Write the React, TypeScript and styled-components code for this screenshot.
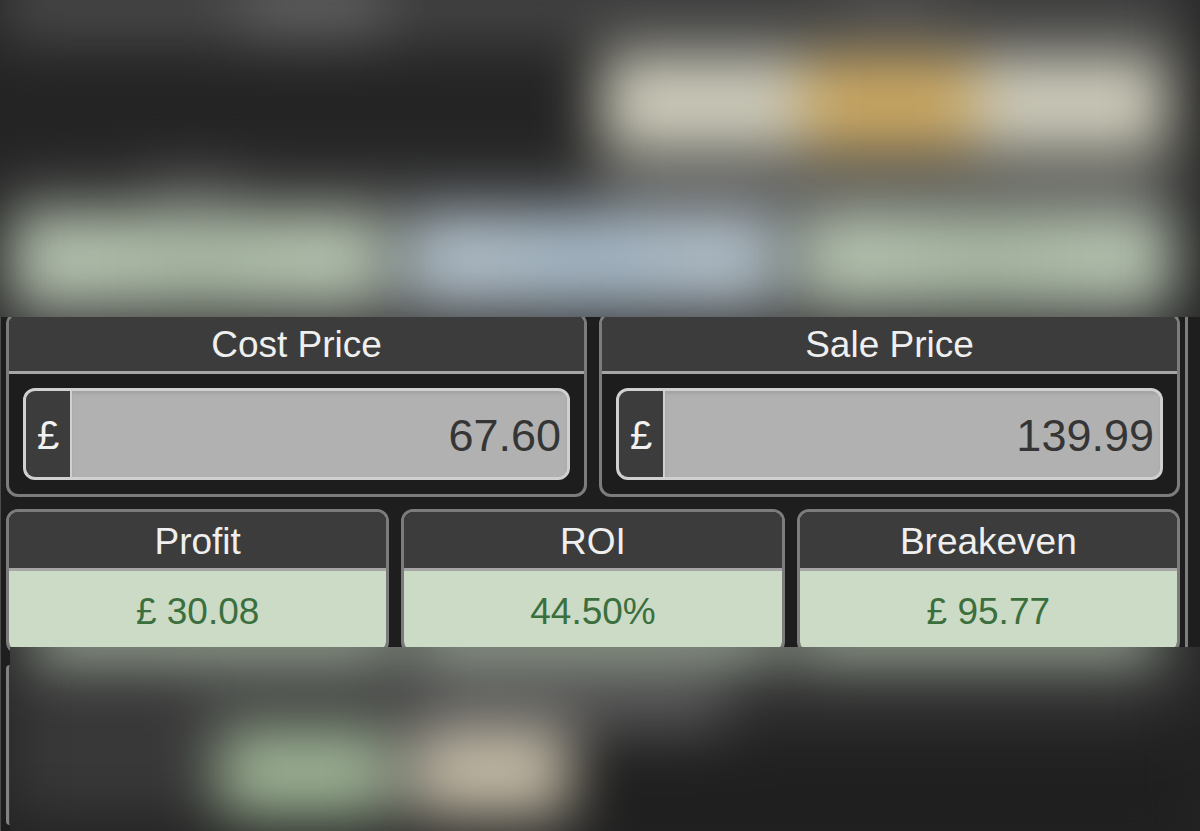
import React, { useState } from "react";
import styled, { createGlobalStyle } from "styled-components";

const GlobalStyle = createGlobalStyle`
  *, *::before, *::after { box-sizing: border-box; }
  body {
    margin: 0;
    background: #1e1e1e;
    font-family: "Liberation Sans", Arial, Helvetica, sans-serif;
  }
`;

const Page = styled.div`
  min-height: 100vh;
  display: flex;
  flex-direction: column;
`;

const Band = styled.div`
  position: relative;
  z-index: 1;
  overflow: hidden;
  background: #242424;
  flex: 1;
`;

const TopBand = styled(Band)`
  flex: none;
`;

const Haze = styled.div`
  margin: -32px 0;
  display: flex;
  flex-direction: column;
  filter: blur(29px);
`;

const HazeRow = styled.div<{ $height: number; $columns: string; $gap?: number; $inset?: string }>`
  height: ${(p) => p.$height}px;
  display: grid;
  grid-template-columns: ${(p) => p.$columns};
  gap: ${(p) => p.$gap ?? 0}px;
  padding: ${(p) => p.$inset ?? "0"};
`;

const Patch = styled.div<{ $fill: string }>`
  background: ${(p) => p.$fill};
`;

const Frame = styled.main`
  margin: -5px 12px 0 0;
  padding: 0 5px;
  border-left: 1px solid #4c4c4c;
  border-right: 3px solid #7d7d7d;
  display: flex;
  flex-direction: column;
  gap: 12px;
`;

const CardRow = styled.div<{ $count: number }>`
  display: grid;
  grid-template-columns: repeat(${(p) => p.$count}, minmax(0, 1fr));
  gap: 12px;
`;

const Card = styled.section`
  border: 3px solid #7c7c7c;
  border-radius: 12px;
  overflow: hidden;
  background: #1d1d1d;
`;

const CardTitle = styled.h2`
  margin: 0;
  height: 59px;
  border-bottom: 3px solid #a6a6a6;
  background: #3c3c3c;
  color: #efefef;
  font-size: 37px;
  font-weight: 400;
  line-height: 60px;
  text-align: center;
`;

const FieldArea = styled.div`
  padding: 14px;
`;

const Field = styled.label`
  display: flex;
  height: 92px;
  border: 3px solid #d0d0d0;
  border-radius: 12px;
  overflow: hidden;
  background: #b1b1b1;
`;

const Prefix = styled.span`
  flex: none;
  width: 46px;
  border-right: 2px solid #d0d0d0;
  background: #3c3c3c;
  color: #f1f1f1;
  font-size: 40px;
  line-height: 88px;
  text-align: center;
`;

const Amount = styled.input`
  flex: 1;
  min-width: 0;
  padding: 4px 6px 0;
  border: 0;
  outline: 0;
  background: #b1b1b1;
  box-shadow: inset 0 3px 3px #a4a4a4;
  color: #353535;
  font-family: inherit;
  font-size: 45px;
  text-align: right;
`;

const Result = styled.output`
  display: block;
  height: 80px;
  background: #ccdbc6;
  color: #3b6f3d;
  font-size: 37px;
  line-height: 82px;
  text-align: center;
`;

const Lower = styled.div`
  flex: 1;
  display: flex;
  margin-top: -7px;
`;

const Rail = styled.div`
  flex: none;
  width: 10px;
  padding: 18px 0 6px 5px;
  border-left: 1px solid #4c4c4c;
  display: flex;
`;

const RailEdge = styled.div`
  flex: 1;
  border-left: 3px solid #828282;
  border-radius: 8px 0 0 8px;
  background: #343434;
`;

function PriceCard({ title, initial }: { title: string; initial: string }) {
  const [value, setValue] = useState(initial);
  return (
    <Card>
      <CardTitle>{title}</CardTitle>
      <FieldArea>
        <Field>
          <Prefix>£</Prefix>
          <Amount
            aria-label={title}
            inputMode="decimal"
            value={value}
            onChange={(e) => setValue(e.target.value)}
          />
        </Field>
      </FieldArea>
    </Card>
  );
}

const results = [
  { title: "Profit", value: "£ 30.08" },
  { title: "ROI", value: "44.50%" },
  { title: "Breakeven", value: "£ 95.77" },
];

const green = "linear-gradient(90deg, #b8c5b3, #b4c2ae 25%, #a9b9a4 50%, #b4c2ae 75%, #b8c5b3)";
const blue = "linear-gradient(90deg, #b1bfc8, #afbdc7 20%, #a2b6c5 50%, #afbdc7 80%, #b1bfc8)";

export default function App() {
  return (
    <>
      <GlobalStyle />
      <Page>
        <TopBand aria-hidden="true">
          <Haze>
            <HazeRow $height={72} $columns="20fr 12fr 38fr 9fr 19fr 2fr">
              <Patch $fill="#494949" />
              <Patch $fill="#626262" />
              <Patch $fill="#444444" />
              <Patch $fill="#505050" />
              <Patch $fill="#434343" />
              <Patch $fill="#303030" />
            </HazeRow>
            <HazeRow $height={16} $columns="1fr 1fr">
              <Patch $fill="#282828" />
              <Patch $fill="#484848" />
            </HazeRow>
            <HazeRow $height={94} $columns="200fr 172fr 193fr" $inset="0 2.5% 0 50%">
              <Patch $fill="#cfcdbc" />
              <Patch $fill="#cca963" />
              <Patch $fill="#cfcdbc" />
            </HazeRow>
            <HazeRow $height={22} $columns="1fr 1fr">
              <Patch $fill="#252525" />
              <Patch $fill="#4c4c48" />
            </HazeRow>
            <HazeRow $height={40} $columns="12fr 8fr 30fr 47fr 3fr">
              <Patch $fill="#363636" />
              <Patch $fill="#545454" />
              <Patch $fill="#3c3c3c" />
              <Patch $fill="#5c5c5b" />
              <Patch $fill="#303030" />
            </HazeRow>
            <HazeRow $height={94} $columns="1fr 1fr 1fr" $gap={16} $inset="0 26px 0 10px">
              <Patch $fill={green} />
              <Patch $fill={blue} />
              <Patch $fill={green} />
            </HazeRow>
            <HazeRow $height={43} $columns="97fr 3fr">
              <Patch $fill="#404040" />
              <Patch $fill="#242424" />
            </HazeRow>
          </Haze>
        </TopBand>

        <Frame>
          <CardRow $count={2}>
            <PriceCard title="Cost Price" initial="67.60" />
            <PriceCard title="Sale Price" initial="139.99" />
          </CardRow>
          <CardRow $count={3}>
            {results.map((r) => (
              <Card key={r.title}>
                <CardTitle>{r.title}</CardTitle>
                <Result>{r.value}</Result>
              </Card>
            ))}
          </CardRow>
        </Frame>

        <Lower aria-hidden="true">
          <Rail>
            <RailEdge />
          </Rail>
          <Band>
            <Haze>
              <HazeRow $height={42} $columns="1fr 1fr 1fr" $gap={16} $inset="0 40px 0 20px">
                <Patch $fill="#b8c8b4" />
                <Patch $fill="#b8c8b4" />
                <Patch $fill="#b8c8b4" />
              </HazeRow>
              <HazeRow $height={22} $columns="1fr">
                <Patch $fill="#383838" />
              </HazeRow>
              <HazeRow $height={52} $columns="15fr 17fr 3fr 25fr 37fr 3fr">
                <Patch $fill="#383838" />
                <Patch $fill="#424342" />
                <Patch $fill="#444444" />
                <Patch $fill="#5c5c5c" />
                <Patch $fill="#303030" />
                <Patch $fill="#252525" />
              </HazeRow>
              <HazeRow $height={86} $columns="209fr 170fr 26fr 156fr 629fr">
                <Patch $fill="#383838" />
                <Patch $fill="#9fb596" />
                <Patch $fill="#555555" />
                <Patch $fill="#c5bca7" />
                <Patch $fill="#1f1f1f" />
              </HazeRow>
              <HazeRow $height={46} $columns="1fr 1fr">
                <Patch $fill="#222222" />
                <Patch $fill="#202020" />
              </HazeRow>
            </Haze>
          </Band>
        </Lower>
      </Page>
    </>
  );
}
